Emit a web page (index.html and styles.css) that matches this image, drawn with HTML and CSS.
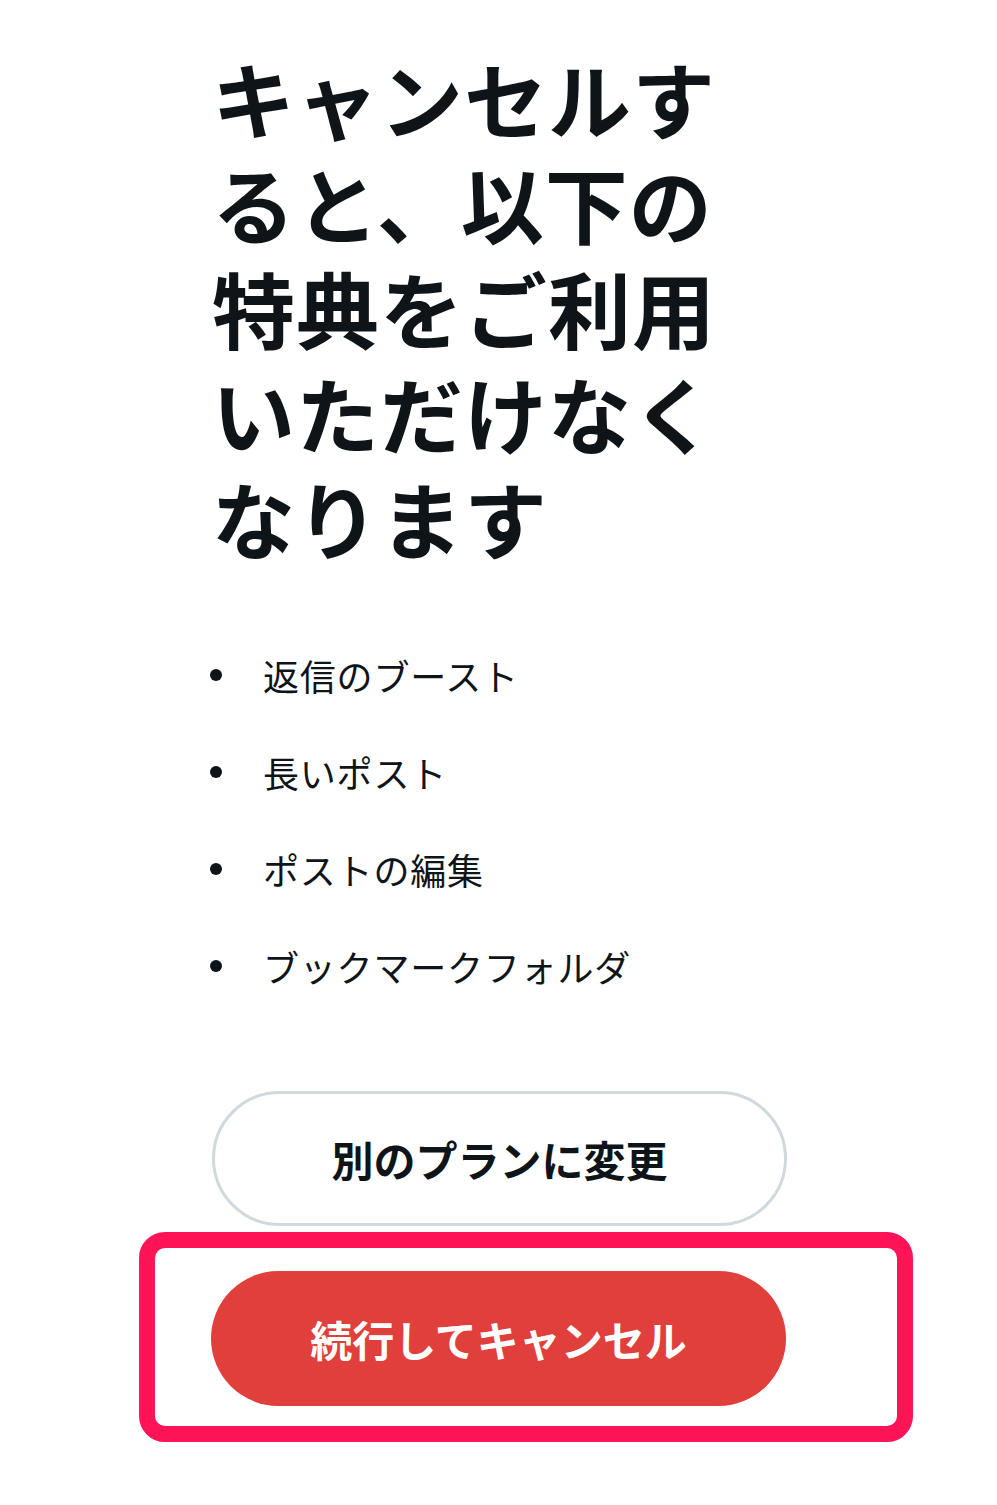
FILE: index.html
```html
<!DOCTYPE html>
<html lang="ja">
<head>
    <meta charset="UTF-8">
    <meta name="viewport" content="width=device-width, initial-scale=1.0">
    <title>キャンセル</title>
    <link rel="stylesheet" href="styles.css">
</head>
<body>

    <div class="page">
        <h1 class="title">キャンセルすると、以下の特典をご利用いただけなくなります</h1>

        <ul class="perks">
            <li class="perk">返信のブースト</li>
            <li class="perk">長いポスト</li>
            <li class="perk">ポストの編集</li>
            <li class="perk">ブックマークフォルダ</li>
        </ul>

        <div class="actions">
            <button class="btn btn-outline">別のプランに変更</button>
            <div class="highlight">
                <button class="btn btn-danger">続行してキャンセル</button>
            </div>
        </div>
    </div>

</body>
</html>
```

FILE: styles.css
```css
* {
    padding: 0;
    margin: 0;
    box-sizing: border-box;
}

body {
    background: #ffffff;
    color: #0f1419;
    font-family: "Noto Sans CJK JP", "Noto Sans", sans-serif;
}

.page {
    width: 574px;
    margin-left: 212px;
    padding-top: 45px;
}

.title {
    font-size: 83px;
    line-height: 105px;
    font-weight: 700;
    letter-spacing: 1px;
}

.perks {
    list-style: none;
    margin-top: 78px;
    display: flex;
    flex-direction: column;
    gap: 43px;
}

.perk {
    display: flex;
    align-items: center;
    gap: 41px;
    font-size: 36px;
    line-height: 54px;
    letter-spacing: 0.8px;
}

.perk::before {
    content: "";
    width: 12px;
    height: 12px;
    border-radius: 50%;
    background: #0f1419;
    flex-shrink: 0;
    margin-left: -2px;
}

.actions {
    margin-top: 98px;
    display: flex;
    flex-direction: column;
}

.btn {
    width: 575px;
    height: 135px;
    border-radius: 68px;
    font-family: inherit;
    font-size: 42px;
    font-weight: 700;
    cursor: pointer;
}

.btn-outline {
    background: #ffffff;
    color: #0f1419;
    border: 3px solid #cfd9de;
}

.highlight {
    margin-top: 6px;
    margin-left: -73px;
    width: 774px;
    border: 16px solid #ff1457;
    border-radius: 26px;
    padding: 23px 110px 20px 56px;
}

.btn-danger {
    display: block;
    background: #e03f3c;
    color: #ffffff;
    border: none;
}
```
